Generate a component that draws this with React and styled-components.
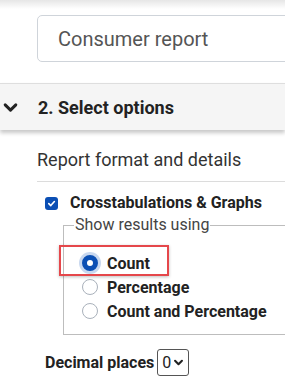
import React from "react";
import styled, { createGlobalStyle } from "styled-components";

const Global = createGlobalStyle`
  html, body { margin: 0; padding: 0; background: #fff; overflow: hidden; }
  body { font-family: Roboto, "Liberation Sans", sans-serif; color: #333; }
  * { box-sizing: border-box; }
`;

const Page = styled.div`
  width: 285px;
  height: 382px;
  position: relative;
  overflow: hidden;
  background: linear-gradient(#e6e6e6 0px, #fff 9px);
`;

const InputRow = styled.div`
  padding: 15px 0 0 37px;
`;

const TextInput = styled.div`
  width: 320px;
  height: 47px;
  border: 1px solid #cfd4da;
  border-radius: 5px;
  padding-left: 20px;
  display: flex;
  align-items: center;
  font-size: 20px;
  color: #555;
  background: #fff;
`;

const Header = styled.div`
  margin-top: 21px;
  height: 47px;
  background: #f5f5f5;
  border-top: 1px solid #dedede;
  box-shadow: 0 3px 4px rgba(0, 0, 0, 0.22);
  display: flex;
  align-items: center;
  gap: 19px;
  padding-left: 2px;
  font-size: 18px;
  font-weight: 700;
  color: #222;
  position: relative;
`;

const Section = styled.div`
  padding-left: 37px;
`;

const SubTitle = styled.div`
  margin-top: 19px;
  font-size: 18px;
  line-height: 22px;
  color: #333;
`;

const Divider = styled.div`
  margin-top: 10px;
  height: 1px;
  background: #dcdcdc;
`;

const CheckRow = styled.label`
  display: flex;
  align-items: center;
  gap: 12px;
  margin: 11px 0 0 8px;
  font-size: 16px;
  font-weight: 700;
  color: #222;
  line-height: 20px;
`;

const CheckBox = styled.span`
  width: 13px;
  height: 13px;
  border-radius: 3px;
  background: #0b4fb4;
  display: flex;
  align-items: center;
  justify-content: center;
`;

const Fieldset = styled.fieldset`
  margin: 2px 0 0 26px;
  width: 300px;
  height: 120px;
  border: 1px solid #bdbdbd;
  border-right: none;
  padding: 10px 0 0 18px;
`;

const Legend = styled.legend`
  font-size: 16px;
  color: #444;
  padding: 0 1px;
  margin-left: -8px;
  line-height: 20px;
`;

const RadioList = styled.div`
  display: flex;
  flex-direction: column;
  gap: 4px;
  margin-top: 8px;
`;

const RadioRow = styled.label`
  display: flex;
  align-items: center;
  gap: 9px;
  height: 20px;
  font-size: 16px;
  font-weight: 700;
  color: #222;
  position: relative;
  width: fit-content;
  padding-right: 3px;
`;

const Highlight = styled.span`
  position: absolute;
  left: -23px;
  top: -8px;
  width: 110px;
  height: 31px;
  border: 2px solid #e5474b;
  box-shadow: 0 1px 3px rgba(0, 0, 0, 0.25);
  pointer-events: none;
`;

const Radio = styled.span`
  width: 16px;
  height: 16px;
  border-radius: 50%;
  border: ${(p) => (p.$on ? "5px solid #0b4fb4" : "1px solid #a9b1bb")};
  background: #fff;
  box-shadow: ${(p) => (p.$on ? "0 0 0 3px rgba(11, 79, 180, 0.22)" : "none")};
  flex: none;
`;

const DecimalRow = styled.div`
  display: flex;
  align-items: center;
  gap: 3px;
  margin: 14px 0 0 8px;
  font-size: 16px;
  font-weight: 700;
  color: #222;
`;

const Select = styled.div`
  width: 32px;
  height: 27px;
  border: 1px solid #555;
  border-radius: 3px;
  display: flex;
  align-items: center;
  gap: 2px;
  padding-left: 4px;
  font-size: 16px;
  font-weight: 400;
  color: #222;
`;

const Chevron = ({ size = 14, w = 3 }) => (
  <svg width={size} height={size} viewBox="0 0 16 16">
    <path d="M3 5.5 L8 10.5 L13 5.5" fill="none" stroke="#222" strokeWidth={w} strokeLinecap="round" strokeLinejoin="round" />
  </svg>
);

const Check = () => (
  <svg width="9" height="9" viewBox="0 0 10 10">
    <path d="M2 5.2 L4.2 7.3 L8.2 2.8" fill="none" stroke="#fff" strokeWidth="1.8" strokeLinecap="round" strokeLinejoin="round" />
  </svg>
);

export default function App() {
  return (
    <>
      <Global />
      <Page>
        <InputRow>
          <TextInput>Consumer report</TextInput>
        </InputRow>
        <Header>
          <Chevron size={17} w={2.8} />
          <span>2. Select options</span>
        </Header>
        <Section>
          <SubTitle>Report format and details</SubTitle>
          <Divider />
          <CheckRow>
            <CheckBox>
              <Check />
            </CheckBox>
            Crosstabulations &amp; Graphs
          </CheckRow>
          <Fieldset>
            <Legend>Show results using</Legend>
            <RadioList>
              <RadioRow>
                <Highlight />
                <Radio $on />
                Count
              </RadioRow>
              <RadioRow>
                <Radio />
                Percentage
              </RadioRow>
              <RadioRow>
                <Radio />
                Count and Percentage
              </RadioRow>
            </RadioList>
          </Fieldset>
          <DecimalRow>
            Decimal places
            <Select>
              0
              <Chevron size={11} w={3} />
            </Select>
          </DecimalRow>
        </Section>
      </Page>
    </>
  );
}
